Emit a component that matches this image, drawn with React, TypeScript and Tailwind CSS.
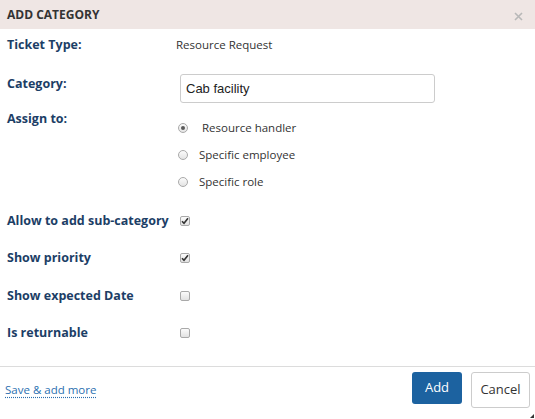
import React from "react";

const font = { fontFamily: '"Open Sans", "Noto Sans", sans-serif' };

function Radio({ checked }: { checked?: boolean }) {
  return (
    <span className="relative inline-flex h-[10px] w-[10px] shrink-0 items-center justify-center rounded-full border border-[#a9a9a9] bg-gradient-to-b from-[#fbfbfb] to-[#e4e4e4]">
      {checked && <span className="h-[4px] w-[4px] rounded-full bg-[#5a5a5a]" />}
    </span>
  );
}

function Check({ checked }: { checked?: boolean }) {
  return (
    <span className="inline-flex h-[10px] w-[10px] shrink-0 items-center justify-center rounded-[2px] border border-[#a9a9a9] bg-gradient-to-b from-[#fbfbfb] to-[#e2e2e2]">
      {checked && (
        <svg width="8" height="8" viewBox="0 0 8 8">
          <path d="M1 4.2 L3 6.3 L7 1.2" fill="none" stroke="#333" strokeWidth="1.6" />
        </svg>
      )}
    </span>
  );
}

export default function App() {
  const label = "text-[12.5px] font-bold leading-[18px] text-[#1c3e66]";
  return (
    <div className="relative flex h-[419px] w-[535px] flex-col bg-white" style={font}>
      <div className="flex h-[29px] shrink-0 items-center justify-between bg-[#efe6e4] pl-[7px] pr-[12px]">
        <span className="text-[12px] font-bold leading-[16px] text-[#333]">ADD CATEGORY</span>
        <svg width="9" height="9" viewBox="0 0 9 9" className="mt-[3px]">
          <path d="M1 1 L8 8 M8 1 L1 8" stroke="#b8b8b8" strokeWidth="1.6" />
        </svg>
      </div>

      <div className="flex-1 pl-[7px] pt-[7px]">
        <div className="flex h-[38px] items-start">
          <span className={`${label} w-[169px]`}>Ticket Type:</span>
          <span className="text-[11.5px] leading-[18px] text-[#333]">Resource Request</span>
        </div>

        <div className="flex h-[36px] items-start">
          <span className={`${label} mt-[1px] w-[173px]`}>Category:</span>
          <div
            className="flex h-[29px] w-[255px] items-center rounded-[3px] border border-[#cccccc] pl-[5px] text-[13px] text-[#222]"
            style={{ fontFamily: '"Liberation Sans", Arial, sans-serif' }}
          >
            Cab facility
          </div>
        </div>

        <div className="flex h-[92px] items-start">
          <span className={`${label} w-[171px]`}>Assign to:</span>
          <div className="mt-[4px] flex flex-col">
            <div className="flex h-[27px] items-center">
              <Radio checked />
              <span className="ml-[14px] text-[11.5px] text-[#333]">Resource handler</span>
            </div>
            <div className="flex h-[27px] items-center">
              <Radio />
              <span className="ml-[11px] text-[11.5px] text-[#333]">Specific employee</span>
            </div>
            <div className="flex h-[27px] items-center">
              <Radio />
              <span className="ml-[11px] text-[11.5px] text-[#333]">Specific role</span>
            </div>
          </div>
        </div>

        {[
          ["Allow to add sub-category", true],
          ["Show priority", true],
          ["Show expected Date", false],
          ["Is returnable", false],
        ].map(([t, c]) => (
          <div key={t as string} className="flex h-[37.5px] items-center">
            <span className={`${label} w-[173px]`}>{t as string}</span>
            <Check checked={c as boolean} />
          </div>
        ))}
      </div>

      <div className="flex h-[53px] shrink-0 items-start justify-between border-t border-[#dcdcdc] pl-[5px] pr-[5px] pt-[5px]">
        <a className="mt-[9px] text-[11.5px] leading-[18px] text-[#2a6fb0] underline decoration-dotted underline-offset-[3px]">
          Save &amp; add more
        </a>
        <div className="flex items-start gap-[9px]">
          <button className="flex h-[32px] w-[50px] items-center justify-center rounded-[3px] bg-[#1c62a0] text-[13px] text-white">
            Add
          </button>
          <button className="flex h-[36px] w-[59px] items-center justify-center rounded-[3px] border border-[#cccccc] bg-white text-[13px] text-[#333]">
            Cancel
          </button>
        </div>
      </div>
      <svg width="4" height="4" viewBox="0 0 4 4" className="absolute bottom-[1px] right-[1px]">
        <path d="M4 0 L4 4 L0 4 Z" fill="#333" />
      </svg>
    </div>
  );
}
